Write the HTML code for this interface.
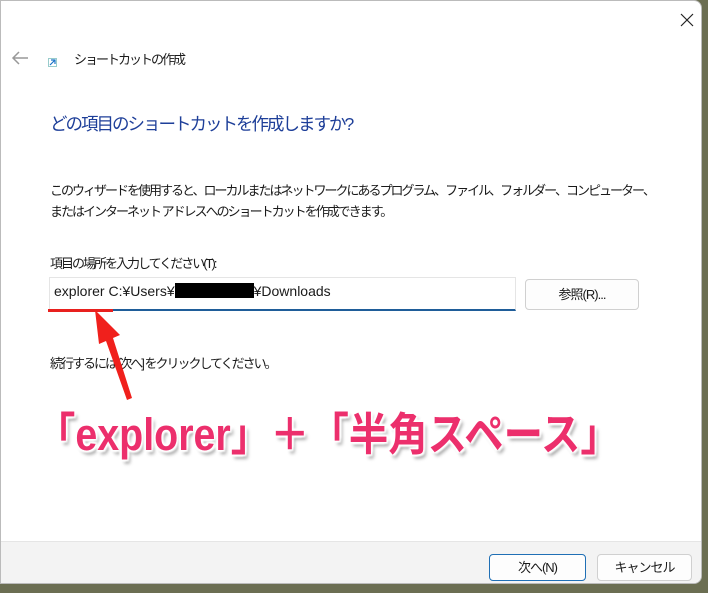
<!DOCTYPE html>
<html><head><meta charset="utf-8"><style>
body{margin:0;width:708px;height:593px;background:#6b6e52;overflow:hidden;position:relative;font-family:"Liberation Sans","Noto Sans CJK JP",sans-serif;color:#1a1a1a}
.win{position:absolute;left:0;top:0;width:702px;height:584px;background:#fff;border-radius:0 8px 8px 0;border:1px solid #bbb;box-sizing:border-box;overflow:hidden}
.foot{position:absolute;left:0;right:0;top:540px;bottom:0;background:#f3f3f3;border-top:1px solid #e5e5e5}
.t{position:absolute;white-space:nowrap;font-size:13px;letter-spacing:-2px}
.btn{position:absolute;background:#fdfdfd;border:1px solid #d0d0d0;border-radius:4px;font-size:13px;text-align:center;box-sizing:border-box;letter-spacing:-1px}
.big{position:absolute;left:36px;top:398px;font-size:45px;font-weight:bold;color:#ec2f6c;white-space:nowrap;text-shadow:0 0 2px #fff,0 0 3px #fff,2px 2px 2px #fff,-2px -2px 2px #fff,2px -2px 2px #fff,-2px 2px 2px #fff,3px 4px 4px rgba(0,0,0,.4);transform:scaleX(0.875);transform-origin:0 0}
</style></head><body>
<div class="win">
<svg style="position:absolute;left:10px;top:50px" width="18" height="14"><path d="M8 1L2 7L8 13M2 7H17" stroke="#999" stroke-width="1.5" fill="none"/></svg>
<svg style="position:absolute;left:47px;top:57px" width="9" height="9"><rect x="0.5" y="0.5" width="8" height="8" fill="#fff" stroke="#9cc"/><path d="M2 7L7 2M3 2H7V6" stroke="#1a73c8" stroke-width="1.2" fill="none"/></svg>
<div class="t" style="left:73px;top:48px">ショートカットの作成</div>
<svg style="position:absolute;left:679px;top:12px" width="14" height="14"><path d="M1 1L13 13M13 1L1 13" stroke="#222" stroke-width="1.2"/></svg>
<div class="t" style="left:49px;top:110px;font-size:17.5px;color:#1e3f99">どの項目のショートカットを作成しますか?</div>
<div class="t" style="left:49px;top:179px">このウィザードを使用すると、ローカルまたはネットワークにあるプログラム、ファイル、フォルダー、コンピューター、</div>
<div class="t" style="left:49px;top:200px">またはインターネット アドレスへのショートカットを作成できます。</div>
<div class="t" style="left:49px;top:252px">項目の場所を入力してください(T):</div>
<div style="position:absolute;left:48px;top:276px;width:467px;height:34px;border:1px solid #e5e5e5;border-bottom:2px solid #1f5d99;box-sizing:border-box"></div>
<div class="t" style="left:53px;top:282px;font-size:14px;letter-spacing:0">explorer C:¥Users¥<span style="display:inline-block;width:79px;height:15px;background:#000;vertical-align:-2px"></span>¥Downloads</div>
<div style="position:absolute;left:47px;top:308px;width:65px;height:3px;background:#e8201e"></div>
<div class="btn" style="left:524px;top:278px;width:114px;height:31px;line-height:29px">参照(R)...</div>
<div class="t" style="left:49px;top:352px">続行するには [次へ] をクリックしてください。</div>
<div class="foot"></div>
<div class="btn" style="left:488px;top:553px;width:97px;height:27px;line-height:25px;border-color:#1f6fb5">次へ(N)</div>
<div class="btn" style="left:596px;top:553px;width:95px;height:27px;line-height:25px">キャンセル</div>
</div>
<svg style="position:absolute;left:0;top:0" width="708" height="593"><path d="M95 310L120 335L113 338L132 398L127 400L106 341L99 344Z" fill="#f0201c"/></svg>
<div class="big">「explorer」＋「半角スペース」</div>
</body></html>
